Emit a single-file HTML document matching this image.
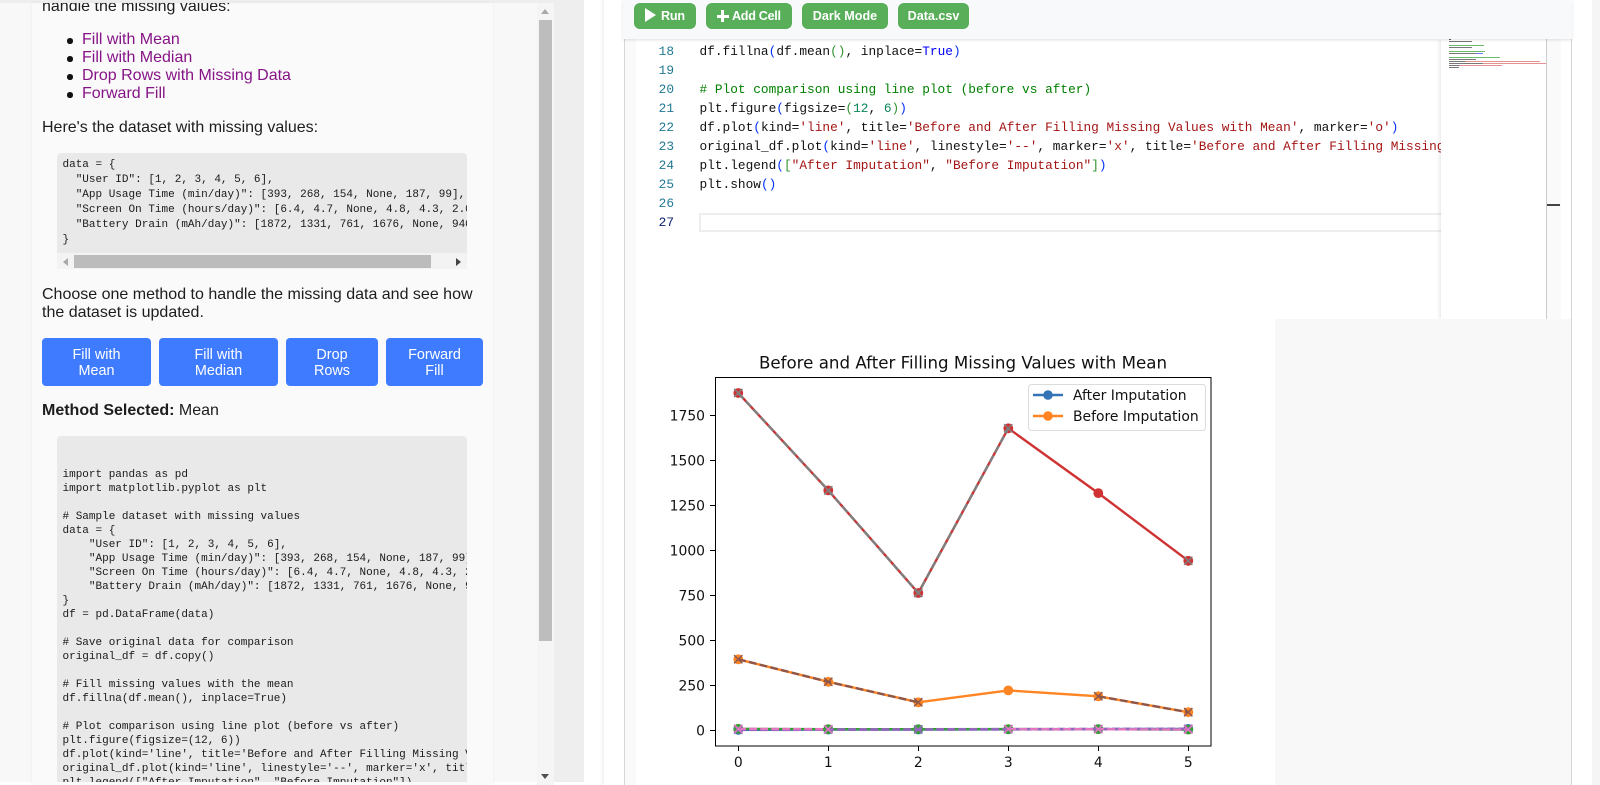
<!DOCTYPE html>
<html><head><meta charset="utf-8"><style>
html,body{margin:0;padding:0;width:1600px;height:785px;overflow:hidden;background:#fff;font-family:"Liberation Sans",Arial,sans-serif}
div,pre,svg{position:absolute;margin:0}
.t{font-size:16px;line-height:18px;color:#1d1d1d;white-space:nowrap;left:42px}
.li{font-size:16px;line-height:18px;color:#861486;white-space:nowrap;left:82px}
.dot{width:5.5px;height:5.5px;border-radius:50%;background:#111;left:67px}
.b{background:#3f7bff;color:#fff;border-radius:4px;top:338px;height:48px;font-size:14.4px;line-height:16px;text-align:center;padding-top:9px;box-sizing:border-box}
.cd{font-family:"Liberation Mono",monospace;font-size:11px;color:#1a1a1a;white-space:pre}
.g{background:#59ae59;color:#fff;border-radius:6px;top:3px;height:26px;font-size:12.6px;font-weight:bold;line-height:26px;text-align:center}
.n{font-family:"Liberation Mono",monospace;font-size:12.8px;line-height:19px;color:#237893;left:640px;width:34px;text-align:right}
.l{font-family:"Liberation Mono",monospace;font-size:12.8px;line-height:19px;color:#111;left:699.5px;white-space:pre}
.c{color:#008000}.s{color:#a31515}.k{color:#0000ff}.m{color:#098658}.b1{color:#0431fa}.b2{color:#319331}
.mm{height:1px;left:1449px;opacity:.8}
</style></head><body>
<!-- left page -->
<div style="left:0;top:0;width:584px;height:782px;background:#f8f8f8"></div>
<div style="left:0;top:0;width:584px;height:3px;background:#eee"></div>
<div style="left:32px;top:3px;width:461px;height:782px;background:#fafafa;box-shadow:0 0 3px rgba(0,0,0,.05)"></div>
<div style="left:554px;top:0;width:30px;height:782px;background:#eee"></div>
<div class="t" style="top:-2px;clip-path:inset(5px 0 0 0)">handle the missing values:</div>
<div class="dot" style="top:38px"></div><div class="li" style="top:31px">Fill with Mean</div>
<div class="dot" style="top:56px"></div><div class="li" style="top:49px">Fill with Median</div>
<div class="dot" style="top:74px"></div><div class="li" style="top:67px">Drop Rows with Missing Data</div>
<div class="dot" style="top:92px"></div><div class="li" style="top:85px">Forward Fill</div>
<div class="t" style="top:119px">Here's the dataset with missing values:</div>
<div style="left:57px;top:153px;width:410px;height:116px;background:#e9e9e9;border-radius:4px 4px 0 0;overflow:hidden">
<pre class="cd" style="left:5.5px;top:5px;line-height:15px">data = {
  "User ID": [1, 2, 3, 4, 5, 6],
  "App Usage Time (min/day)": [393, 268, 154, None, 187, 99],
  "Screen On Time (hours/day)": [6.4, 4.7, None, 4.8, 4.3, 2.0],
  "Battery Drain (mAh/day)": [1872, 1331, 761, 1676, None, 940]
}</pre>
<div style="left:0;top:100px;width:410px;height:16px;background:#f3f3f3"></div>
<div style="left:17px;top:102px;width:357px;height:13px;background:#bcbcbc"></div>
<div style="left:6px;top:105px;width:0;height:0;border:4px solid transparent;border-right:5px solid #a8a8a8;border-left:0"></div>
<div style="left:399px;top:105px;width:0;height:0;border:4px solid transparent;border-left:5px solid #444;border-right:0"></div>
</div>
<div class="t" style="top:286px">Choose one method to handle the missing data and see how</div>
<div class="t" style="top:304px">the dataset is updated.</div>
<div class="b" style="left:42px;width:109px">Fill with<br>Mean</div>
<div class="b" style="left:159px;width:119px">Fill with<br>Median</div>
<div class="b" style="left:286px;width:92px">Drop<br>Rows</div>
<div class="b" style="left:386px;width:97px">Forward<br>Fill</div>
<div class="t" style="top:402px"><b>Method Selected:</b> Mean</div>
<div style="left:57px;top:436px;width:410px;height:346px;background:#e9e9e9;border-radius:4px 4px 0 0;overflow:hidden">
<pre class="cd" style="left:5.5px;top:32px;line-height:14px">import pandas as pd
import matplotlib.pyplot as plt

# Sample dataset with missing values
data = {
    "User ID": [1, 2, 3, 4, 5, 6],
    "App Usage Time (min/day)": [393, 268, 154, None, 187, 99],
    "Screen On Time (hours/day)": [6.4, 4.7, None, 4.8, 4.3, 2.0],
    "Battery Drain (mAh/day)": [1872, 1331, 761, 1676, None, 940]
}
df = pd.DataFrame(data)

# Save original data for comparison
original_df = df.copy()

# Fill missing values with the mean
df.fillna(df.mean(), inplace=True)

# Plot comparison using line plot (before vs after)
plt.figure(figsize=(12, 6))
df.plot(kind='line', title='Before and After Filling Missing Values with Mean', marker='o')
original_df.plot(kind='line', linestyle='--', marker='x', title='Before and After Filling Missing')
plt.legend(["After Imputation", "Before Imputation"])</pre>
</div>
<div style="left:537px;top:3px;width:17px;height:782px;background:#f5f5f5"></div>
<div style="left:539px;top:20px;width:13px;height:621px;background:#bdbdbd"></div>
<div style="left:541px;top:9px;width:0;height:0;border:4px solid transparent;border-bottom:5px solid #a8a8a8;border-top:0"></div>
<div style="left:541px;top:774px;width:0;height:0;border:4px solid transparent;border-top:5px solid #505050;border-bottom:0"></div>
<!-- right page -->
<div style="left:600px;top:0;width:4px;height:785px;background:linear-gradient(90deg,#fff,#f0f0f0)"></div>
<div style="left:624px;top:39px;width:948px;height:746px;background:#fff;border-left:1px solid #d6d6d6;border-right:1px solid #d6d6d6;box-sizing:border-box"></div>
<div style="left:625px;top:39px;width:11px;height:746px;background:#fafafa"></div>
<div style="left:1592px;top:0;width:8px;height:785px;background:#f5f5f5"></div>
<!-- editor -->
<div style="left:699px;top:213px;width:760px;height:19px;border:2px solid #eee;box-sizing:border-box"></div>
<div class="n" style="top:23px">17</div><div class="l c" style="top:23px"># Fill missing values with the mean</div>
<div class="n" style="top:42px">18</div><div class="l" style="top:42px">df.fillna<span class="b1">(</span>df.mean<span class="b2">()</span>, inplace=<span class="k">True</span><span class="b1">)</span></div>
<div class="n" style="top:61px">19</div>
<div class="n" style="top:80px">20</div><div class="l c" style="top:80px"># Plot comparison using line plot (before vs after)</div>
<div class="n" style="top:99px">21</div><div class="l" style="top:99px">plt.figure<span class="b1">(</span>figsize=<span class="b2">(</span><span class="m">12</span>, <span class="m">6</span><span class="b2">)</span><span class="b1">)</span></div>
<div class="n" style="top:118px">22</div><div class="l" style="top:118px">df.plot<span class="b1">(</span>kind=<span class="s">'line'</span>, title=<span class="s">'Before and After Filling Missing Values with Mean'</span>, marker=<span class="s">'o'</span><span class="b1">)</span></div>
<div class="n" style="top:137px">23</div><div class="l" style="top:137px">original_df.plot<span class="b1">(</span>kind=<span class="s">'line'</span>, linestyle=<span class="s">'--'</span>, marker=<span class="s">'x'</span>, title=<span class="s">'Before and After Filling Missing Values</span></div>
<div class="n" style="top:156px">24</div><div class="l" style="top:156px">plt.legend<span class="b1">(</span><span class="b2">[</span><span class="s">"After Imputation"</span>, <span class="s">"Before Imputation"</span><span class="b2">]</span><span class="b1">)</span></div>
<div class="n" style="top:175px">25</div><div class="l" style="top:175px">plt.show<span class="b1">()</span></div>
<div class="n" style="top:194px">26</div>
<div class="n" style="top:213px;color:#0b216f">27</div>
<!-- minimap -->
<div style="left:1441px;top:39px;width:105px;height:280px;background:#fff;box-shadow:-2px 0 3px rgba(0,0,0,.08)"></div>
<div style="left:1546px;top:39px;width:1px;height:280px;background:#ccc"></div>
<div style="left:1547px;top:39px;width:14px;height:280px;background:#fafafa"></div>
<div style="left:1547px;top:204px;width:13px;height:2px;background:#444"></div>
<div class="mm" style="top:39px;width:2px;background:#333"></div>
<div class="mm" style="top:41px;width:23px;background:#555"></div>
<div class="mm" style="top:45px;width:35px;background:#4aa84a"></div>
<div class="mm" style="top:47px;width:23px;background:#555"></div>
<div class="mm" style="top:51px;width:36px;background:#4aa84a"></div>
<div class="mm" style="top:53px;width:34px;background:linear-gradient(90deg,#555 80%,#55f 80%)"></div>
<div class="mm" style="top:57px;width:51px;background:#4aa84a"></div>
<div class="mm" style="top:59px;width:27px;background:#555"></div>
<div class="mm" style="top:61px;width:91px;background:linear-gradient(90deg,#555 18%,#d77 18%)"></div>
<div class="mm" style="top:63px;width:97px;background:linear-gradient(90deg,#555 35%,#d77 35%)"></div>
<div class="mm" style="top:65px;width:53px;background:linear-gradient(90deg,#555 20%,#d77 20%)"></div>
<div class="mm" style="top:67px;width:10px;background:#555"></div>
<!-- toolbar -->
<div style="left:623px;top:0;width:949px;height:39px;background:#f8f9fa;box-shadow:0 1px 3px rgba(0,0,0,.12)"></div>
<div class="g" style="left:634px;width:62px;box-sizing:border-box;text-align:left;padding-left:27px;letter-spacing:-.2px">Run</div>
<div style="left:645px;top:8px;width:0;height:0;border-left:11px solid #fff;border-top:7px solid transparent;border-bottom:7px solid transparent"></div>
<div class="g" style="left:706px;width:86px;text-align:left;padding-left:26px;box-sizing:border-box;letter-spacing:-.3px">Add Cell</div>
<div style="left:717px;top:14.5px;width:11.5px;height:3px;background:#fff"></div>
<div style="left:721.2px;top:10px;width:3px;height:12px;background:#fff"></div>
<div class="g" style="left:802px;width:86px">Dark Mode</div>
<div class="g" style="left:898px;width:71px">Data.csv</div>
<!-- output -->
<div style="left:1275px;top:319px;width:296px;height:466px;background:#f8f8f8"></div>
<svg width="1600" height="785" style="left:0;top:0" font-family="'DejaVu Sans',sans-serif" fill="#111">
<defs>
<marker id="c0" markerUnits="userSpaceOnUse" markerWidth="12" markerHeight="12" refX="6" refY="6"><circle cx="6" cy="6" r="4.9" fill="#3274b5"/></marker>
<marker id="c1" markerUnits="userSpaceOnUse" markerWidth="12" markerHeight="12" refX="6" refY="6"><circle cx="6" cy="6" r="4.9" fill="#ff8423"/></marker>
<marker id="c2" markerUnits="userSpaceOnUse" markerWidth="12" markerHeight="12" refX="6" refY="6"><circle cx="6" cy="6" r="4.9" fill="#369f36"/></marker>
<marker id="c3" markerUnits="userSpaceOnUse" markerWidth="12" markerHeight="12" refX="6" refY="6"><circle cx="6" cy="6" r="4.9" fill="#cf3232"/></marker>
</defs>
<text x="963" y="368.5" font-size="16.67" text-anchor="middle">Before and After Filling Missing Values with Mean</text>
<g fill="none" stroke-width="2.4">
<polyline stroke="#3274b5" marker-start="url(#c0)" marker-mid="url(#c0)" marker-end="url(#c0)" points="738.3,729.8 828.3,729.6 918.3,729.5 1008.3,729.3 1098.3,729.1 1188.3,728.9"/>
<polyline stroke="#ff8423" marker-start="url(#c1)" marker-mid="url(#c1)" marker-end="url(#c1)" points="738.3,659.3 828.3,681.8 918.3,702.3 1008.3,690.4 1098.3,696.3 1188.3,712.2"/>
<polyline stroke="#369f36" marker-start="url(#c2)" marker-mid="url(#c2)" marker-end="url(#c2)" points="738.3,728.8 828.3,729.2 918.3,729.2 1008.3,729.1 1098.3,729.2 1188.3,729.6"/>
<polyline stroke="#cf3232" marker-start="url(#c3)" marker-mid="url(#c3)" marker-end="url(#c3)" points="738.3,393 828.3,490.4 918.3,593 1008.3,428.3 1098.3,493.1 1188.3,560.8"/>
<g stroke-dasharray="7.7 3.3">
<polyline stroke="#9467bd" stroke-width="2.8" points="738.3,729.8 828.3,729.6 918.3,729.5 1008.3,729.3 1098.3,729.1 1188.3,728.9"/>
<polyline stroke="#8c564b" points="738.3,659.3 828.3,681.8 918.3,702.3"/>
<polyline stroke="#8c564b" points="1098.3,696.3 1188.3,712.2"/>
<polyline stroke="#e377c2" points="738.3,728.8 828.3,729.2"/>
<polyline stroke="#e377c2" points="1008.3,729.1 1098.3,729.2 1188.3,729.6"/>
<polyline stroke="#7f7f7f" points="738.3,393 828.3,490.4 918.3,593 1008.3,428.3"/>
</g>
<g stroke-width="1.5">
<path stroke="#9467bd" d="M734.1 725.6l8.3 8.3m0-8.3l-8.3 8.3M824.1 725.4l8.3 8.3m0-8.3l-8.3 8.3M914.1 725.3l8.3 8.3m0-8.3l-8.3 8.3M1004.1 725.1l8.3 8.3m0-8.3l-8.3 8.3M1094.1 724.9l8.3 8.3m0-8.3l-8.3 8.3M1184.1 724.7l8.3 8.3m0-8.3l-8.3 8.3"/>
<path stroke="#8c564b" d="M734.1 655.1l8.3 8.3m0-8.3l-8.3 8.3M824.1 677.6l8.3 8.3m0-8.3l-8.3 8.3M914.1 698.1l8.3 8.3m0-8.3l-8.3 8.3M1094.1 692.1l8.3 8.3m0-8.3l-8.3 8.3M1184.1 708l8.3 8.3m0-8.3l-8.3 8.3"/>
<path stroke="#e377c2" d="M734.1 724.6l8.3 8.3m0-8.3l-8.3 8.3M824.1 725l8.3 8.3m0-8.3l-8.3 8.3M1004.1 724.9l8.3 8.3m0-8.3l-8.3 8.3M1094.1 725l8.3 8.3m0-8.3l-8.3 8.3M1184.1 725.4l8.3 8.3m0-8.3l-8.3 8.3"/>
<path stroke="#7f7f7f" d="M734.1 388.8l8.3 8.3m0-8.3l-8.3 8.3M824.1 486.2l8.3 8.3m0-8.3l-8.3 8.3M914.1 588.8l8.3 8.3m0-8.3l-8.3 8.3M1004.1 424.1l8.3 8.3m0-8.3l-8.3 8.3M1184.1 556.6l8.3 8.3m0-8.3l-8.3 8.3"/>
</g>
</g>
<rect x="715.5" y="377.5" width="495.5" height="368.5" fill="none" stroke="#000" stroke-width="1"/>
<g stroke="#000" stroke-width="1">
<path d="M710 730.5h5M710 685.5h5M710 640.5h5M710 595.5h5M710 550.5h5M710 505.5h5M710 460.5h5M710 415.5h5"/>
<path d="M738.5 746v5M828.5 746v5M918.5 746v5M1008.5 746v5M1098.5 746v5M1188.5 746v5"/>
</g>
<g font-size="13.9" text-anchor="end">
<text x="705" y="735.5">0</text><text x="705" y="690.5">250</text><text x="705" y="645.5">500</text><text x="705" y="600.5">750</text><text x="705" y="555.5">1000</text><text x="705" y="510.5">1250</text><text x="705" y="465.5">1500</text><text x="705" y="420.5">1750</text>
</g>
<g font-size="13.9" text-anchor="middle">
<text x="738.3" y="767">0</text><text x="828.3" y="767">1</text><text x="918.3" y="767">2</text><text x="1008.3" y="767">3</text><text x="1098.3" y="767">4</text><text x="1188.3" y="767">5</text>
</g>
<rect x="1028.5" y="384.5" width="177" height="46" rx="3" fill="#fff" fill-opacity=".8" stroke="#dcdcdc"/>
<path d="M1033 395h30" stroke="#3274b5" stroke-width="2.4"/><circle cx="1048" cy="395" r="4.8" fill="#3274b5"/>
<path d="M1033 416h30" stroke="#ff8423" stroke-width="2.4"/><circle cx="1048" cy="416" r="4.8" fill="#ff8423"/>
<text x="1073" y="400" font-size="13.9">After Imputation</text>
<text x="1073" y="421" font-size="13.9">Before Imputation</text>
</svg>
</body></html>
